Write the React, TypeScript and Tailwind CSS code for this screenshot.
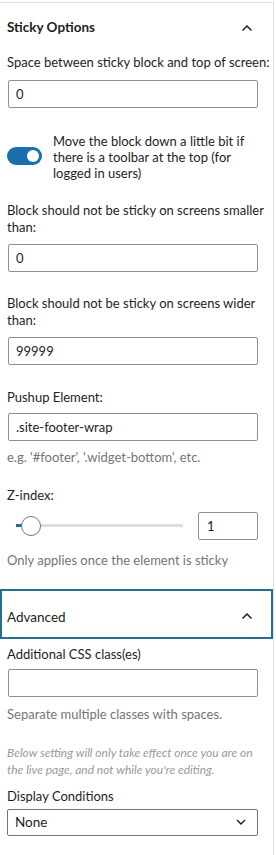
import { useState } from 'react';

// ─── Small bits ───────────────────────────────────────────────────────────────

function ChevronUp() {
  return (
    <svg width="12" height="8" viewBox="0 0 12 8" fill="none" stroke="#1e1e1e" strokeWidth="1.5">
      <polyline points="1.5,6.5 6,2 10.5,6.5" />
    </svg>
  );
}

function ChevronDown() {
  return (
    <svg width="10" height="6" viewBox="0 0 10 6" fill="none" stroke="#1e1e1e" strokeWidth="1.4">
      <polyline points="1,1 5,5 9,1" />
    </svg>
  );
}

function TextField({ value }: { value: string }) {
  return (
    <input
      readOnly
      value={value}
      className="block w-[250px] h-[28px] px-[7px] border border-[#8c8f94] rounded-[2px] text-[13px] text-[#1e1e1e] outline-none bg-white"
    />
  );
}

function Label({ children, className = '' }: { children: React.ReactNode; className?: string }) {
  return <p className={`text-[13px] leading-[17.5px] text-[#1e1e1e] ${className}`}>{children}</p>;
}

function Help({ children, className = '' }: { children: React.ReactNode; className?: string }) {
  return <p className={`text-[13px] leading-[16px] text-[#757575] ${className}`}>{children}</p>;
}

// ─── Main ─────────────────────────────────────────────────────────────────────

export default function App() {
  const [toolbar, setToolbar] = useState(true);

  return (
    <div className="w-[276px] h-[855px] bg-white pt-[2px] overflow-hidden" style={{ fontFamily: 'Lato, "Noto Sans", sans-serif' }}>
      <div className="w-[274px] h-full border-t border-r border-[#e0e0e0]">
        {/* Sticky Options */}
        <div className="h-[49px] flex items-center justify-between pl-[7px] pr-[20px]">
          <span className="text-[13.5px] font-bold text-[#1e1e1e]">Sticky Options</span>
          <ChevronUp />
        </div>

        <div className="pl-[8px]">
          <Label className="mt-[2px] -ml-px">Space between sticky block and top of screen:</Label>
          <div className="mt-[8px]">
            <TextField value="0" />
          </div>

          <div className="flex mt-[25px]">
            <button
              onClick={() => setToolbar(!toolbar)}
              className={`mt-[14px] -ml-px w-[35px] h-[18px] rounded-full flex items-center px-[3px] shrink-0 ${toolbar ? 'bg-[#1a6fae] justify-end' : 'bg-[#949494] justify-start'}`}
            >
              <span className="w-[12px] h-[12px] rounded-full bg-white" />
            </button>
            <p className="ml-[11px] text-[13px] leading-[16px] text-[#1e1e1e] w-[200px]">
              Move the block down a little bit if there is a toolbar at the top (for logged in users)
            </p>
          </div>

          <Label className="mt-[21px] -ml-px">Block should not be sticky on screens smaller than:</Label>
          <div className="mt-[7px]">
            <TextField value="0" />
          </div>

          <Label className="mt-[23px] -ml-px">Block should not be sticky on screens wider than:</Label>
          <div className="mt-[7px]">
            <TextField value="99999" />
          </div>

          <Label className="mt-[24px] -ml-px">Pushup Element:</Label>
          <div className="mt-[7px]">
            <TextField value=".site-footer-wrap" />
          </div>
          <Help className="mt-[8px] -ml-px">e.g. '#footer', '.widget-bottom', etc.</Help>

          <Label className="mt-[22px] -ml-px">Z-index:</Label>
          <div className="mt-[7px] flex items-center h-[28px]">
            <div className="relative w-[175px] h-[28px] flex items-center">
              <div className="ml-[8px] w-[167px] h-[3px] bg-[#dddddd]" />
              <div className="absolute left-[8px] top-[12.5px] w-[8px] h-[3px] bg-[#1f6f92]" />
              <div className="absolute left-[13px] top-[4px] w-[20px] h-[20px] rounded-full bg-white border border-[#757575]" />
            </div>
            <input
              readOnly
              value="1"
              className="ml-[15px] w-[60px] h-[28px] px-[8px] border border-[#8c8f94] rounded-[2px] text-[13px] text-[#1e1e1e] outline-none"
            />
          </div>
          <Help className="mt-[12px] -ml-px">Only applies once the element is sticky</Help>
        </div>

        {/* Advanced */}
        <div className="mt-[21px] h-[50px] border-2 border-[#23708f] flex items-start justify-between pl-[5px] pr-[18px] pt-[17px]">
          <span className="text-[13.5px] leading-[18px] text-[#1e1e1e]">Advanced</span>
          <div className="pt-[4px]">
            <ChevronUp />
          </div>
        </div>

        <div className="pl-[8px]">
          <Label className="mt-[7px] -ml-px">Additional CSS class(es)</Label>
          <div className="mt-[6px]">
            <TextField value="" />
          </div>
          <Help className="mt-[9px] -ml-px">Separate multiple classes with spaces.</Help>

          <p className="mt-[22px] -ml-px w-[252px] text-[12px] leading-[17px] italic text-[#9a9a9a]">
            Below setting will only take effect once you are on the live page, and not while you're editing.
          </p>

          <Label className="mt-[10px] -ml-px">Display Conditions</Label>
          <div className="mt-[3px] -ml-px w-[251px] h-[27px] border border-[#757575] rounded-[2px] flex items-center justify-between pl-[7px] pr-[11px]">
            <span className="text-[13.5px] text-[#1e1e1e]">None</span>
            <ChevronDown />
          </div>
        </div>
      </div>
    </div>
  );
}
